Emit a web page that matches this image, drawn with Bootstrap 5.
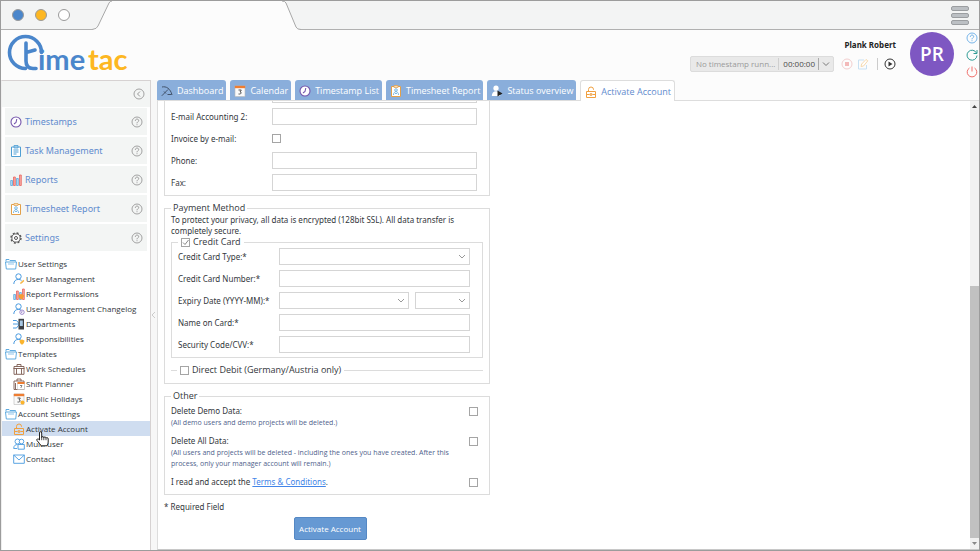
<!DOCTYPE html>
<html lang="en">
<head>
<meta charset="utf-8">
<meta name="viewport" content="width=device-width, initial-scale=1">
<title>TimeTac – Activate Account</title>
<link href="https://cdn.jsdelivr.net/npm/bootstrap@5.3.0/dist/css/bootstrap.min.css" rel="stylesheet">
<style>
body{font-family:"Open Sans","Noto Sans",sans-serif;font-size:8px;line-height:12px;color:#33373c;background:#fcfcfc;border:1px solid #9c9c9c}
svg{display:block;flex:none}
button{font:inherit;color:inherit;padding:0;border:0;background:none}
a{text-decoration:none;color:inherit}
/* browser frame */
.frame-bar{height:29px;background:#f3f4f4;border-bottom:1px solid #b0b0b0}
.frame-dots{padding-left:11px;gap:11px}
.dot{width:12px;height:12px;border-radius:50%;border:1px solid #9a9a9a;background:#fff}
.dot-blue{background:#4a86cb}.dot-amber{background:#fdb722}
.frame-tab{margin:0 0 -1px 22px}
.burger{width:18px;gap:2px;margin-right:10px}
.burger i{height:5px;background:#bcc0c4;border:1px solid #9b9ea1;border-radius:2px}
/* header */
.app-head{height:50px;padding-left:6px}
.user-box{padding:9px 14px 0 0;gap:5px}
.tracker{height:16px;background:#e9e9e9;border:1px solid #dcdcdc;border-radius:2px;color:#9a9a9a;padding:0 3px 0 5px}
.tracker .time{color:#4a4a4a;border-left:1px solid #cfcfcf;border-right:1px solid #aaa;padding:0 3px 0 4px;margin:0 3px}
.tools{gap:4px;padding-left:7px}
.vline{width:1px;height:12px;background:#ccc;margin:0 2px 0 4px}
.user-name{font:700 8px/12px "Noto Sans",sans-serif;color:#222}
.avatar{width:44px;height:44px;border-radius:50%;background:#7e57c2;color:#fff;font-size:19px;font-weight:600;margin-top:2px}
.quick{gap:5px;padding:2px 1px 0 12px}
/* sidebar */
.side{width:150px;background:#fff;border:1px solid #d6d2d2;border-left-color:#eee;border-bottom:0}
.side-top{height:26px;background:#f3f5f4;padding-right:5px}
.side-sections{padding:1px 3px 0;gap:2px}
.side-sections a{height:27px;background:#f3f5f4;color:#5f8bce;font-family:"Noto Sans",sans-serif;font-size:9px;padding:0 4px 0 5px;gap:3px}
.tree{padding-top:5px}
.tree a{height:15px;gap:1px;padding-left:3px;white-space:nowrap}
.tree ul a{padding-left:11px}
.tree a.active{background:#cfddf0}
.hand{left:34px;top:10px;z-index:2}
.splitter{width:6px;background:#f7f7f7;color:#bbb}
/* tabs */
.work-tabs{height:20px;gap:4px;font-size:9px}
.work-tabs a{background:#8aaedb;color:#fff;border-radius:3px 3px 0 0;padding:2px 3px 0 4px;gap:4px;white-space:nowrap}
.work-tabs a.active{background:#fff;color:#5f8bce;border:1px solid #ddd;border-bottom:0;height:21px;z-index:1}
.pane{background:#fff;border:1px solid #ddd;border-right:0;border-bottom-color:#c8c8c8}
/* form */
.form-body{padding:0 6px 9px;width:338px;max-width:100%;font-family:"Noto Sans",sans-serif}
fieldset.box{border:1px solid #dcdcdc;padding:0 6px 4px}
fieldset.pay{padding-bottom:7px}
fieldset.box>legend{float:none;width:auto;font:9px/12px "Open Sans",sans-serif;margin:0;padding:0 2px}
fieldset.box>legend.tick{padding:0 3px}
fieldset.line-only{border-width:1px 0 0;padding:0 6px;height:12px}
.tick span{gap:3px}
.rows{display:flex;flex-direction:column;gap:5px}
.row-line{display:flex;align-items:center;height:17px;margin-right:6px}
.row-line>label{width:101px;flex:none;white-space:nowrap}
.inp{flex:1 1 0;min-width:0;height:17px;border:1px solid #d5d5d5;background:#fff;border-radius:0;padding:0 4px;font-size:8px;color:#33373c}
.inp.month{flex:0 0 55px}
.pair{gap:6px}
select.inp{appearance:none;background:#fff url("data:image/svg+xml,%3Csvg xmlns='http://www.w3.org/2000/svg' viewBox='0 0 8 6'%3E%3Cpath d='M1 1l3 3 3-3' fill='none' stroke='%23999'/%3E%3C/svg%3E") no-repeat right 3px center/8px 6px}
.chk{appearance:none;width:9px;height:9px;border:1px solid #a5a5a5;background:#fff;margin:0;flex:none}
.chk:checked{background:#fff url("data:image/svg+xml,%3Csvg xmlns='http://www.w3.org/2000/svg' viewBox='0 0 7 7'%3E%3Cpath d='M1 3.5l2 2L6.500 1' fill='none' stroke='%23888'/%3E%3C/svg%3E")}
.intro{line-height:11px;margin:0}
.note{font:7px/11px "Open Sans",sans-serif;color:#4f5f8c;margin:0;padding-right:18px}
.opts{gap:7px;padding:3px 5px 2px 0}
.gap6{margin-top:6px}
.terms{color:#4285e8;text-decoration:underline}
.submit{height:23px;width:73px;background:#6699d3;border:1px solid #5588c4;border-radius:2px;color:#fff;font:500 8px/12px "Open Sans",sans-serif;margin:4px 0 0 6px}
/* scrollbar */
.sbar{width:9px;background:#f1f1f1}
.sbar button{height:11px;width:9px}
.sbar .thumb{background:#c1c1c1;flex:254}
.sbar .track{flex:175}
</style>
</head>
<body class="vh-100 d-flex flex-column overflow-hidden">
<svg width="0" height="0" class="position-absolute" aria-hidden="true">
<symbol id="i-help" viewBox="0 0 12 12"><circle cx="6" cy="6" r="5" fill="none" stroke="currentColor" stroke-width=".9"/><path d="M4.300 4.800C4.300 2.500 7.700 2.600 7.700 4.600 7.700 5.800 6 5.800 6 7.300M6 8.300V9.200" fill="none" stroke="currentColor" stroke-width="1"/></symbol>
<symbol id="i-clock" viewBox="0 0 12 12"><circle cx="6" cy="6" r="5" fill="#fff" stroke="#7657ac" stroke-width="1.100"/><path d="M6.800 3L6 6.500 4 8" fill="none" stroke="#7657ac" stroke-width="1.100"/></symbol>
<symbol id="i-clip" viewBox="0 0 12 12"><path d="M1.500 2h9v9.500h-9z" fill="#fff" stroke="#4f9fd4"/><path d="M4 .5h4v2.500H4z" fill="#9dcbea" stroke="#4f9fd4" stroke-width=".8"/><path d="M3.500 5h5M3.500 7h5M3.500 9h3" stroke="#4f9fd4"/></symbol>
<symbol id="i-bars" viewBox="0 0 12 12"><path d="M.7 6.500h1.800v5H.7z" fill="#b9dcf3" stroke="#5ba7dc" stroke-width=".8"/><path d="M3.500 3h1.800v8.500H3.500zM9.500 1h1.800v10.500H9.500z" fill="#f7a8a3" stroke="#e8655f" stroke-width=".8"/><path d="M6.500 4.500h1.800v7H6.500z" fill="#b9dcf3" stroke="#5ba7dc" stroke-width=".8"/></symbol>
<symbol id="i-sheet" viewBox="0 0 12 12"><path d="M1.500 1.500h9v10h-9z" fill="#fff" stroke="#e2a04a"/><path d="M4 .5h4v2H4z" fill="#f8dfba" stroke="#e2a04a" stroke-width=".7"/><circle cx="6" cy="5" r="1.300" fill="none" stroke="#5ba7dc" stroke-width=".8"/><path d="M3.500 10c0-4.500 5-4.500 5 0M5 8l1 1 1-1" fill="none" stroke="#5ba7dc" stroke-width=".8"/></symbol>
<symbol id="i-gear" viewBox="0 0 12 12"><circle cx="6" cy="6" r="5" fill="none" stroke="#555" stroke-width="1.400" stroke-dasharray="2 1.930"/><circle cx="6" cy="6" r="4.100" fill="#fff" stroke="#555" stroke-width=".9"/><circle cx="6" cy="6" r="1.500" fill="none" stroke="#555" stroke-width="1"/></symbol>
<symbol id="i-folder" viewBox="0 0 12 12"><path d="M1 3.500V1.500h3l1 1h5.500v1M.5 4h11l-.8 7H1.300z" fill="#fff" stroke="#4fa3dc" stroke-width=".9"/><path d="M3 6h6" stroke="#8fc4ea"/></symbol>
<symbol id="i-user" viewBox="0 0 12 12"><circle cx="5.500" cy="3.500" r="2.700" fill="none" stroke="#4a9be0"/><path d="M.8 11c0-3 2-4.600 4.700-4.600 1.200 0 2.200.4 3 1" fill="none" stroke="#4a9be0"/></symbol>
<symbol id="i-user-pen" viewBox="0 0 12 12"><use href="#i-user"/><path d="M7 11l.6-1.800 2.800-2.500 1 1.200-2.700 2.500z" fill="#f6b94c"/></symbol>
<symbol id="i-user-clock" viewBox="0 0 12 12"><use href="#i-user"/><circle cx="9" cy="9.200" r="2.200" fill="#fff" stroke="#8a6fc0" stroke-width=".8"/><path d="M9 8v1.400H8" fill="none" stroke="#8a6fc0" stroke-width=".7"/></symbol>
<symbol id="i-user-shield" viewBox="0 0 12 12"><use href="#i-user"/><path d="M6.500 7.500l2.500-1 2.500 1c0 2-.8 3.200-2.500 4.200-1.700-1-2.500-2.200-2.500-4.200z" fill="#fbb42c"/></symbol>
<symbol id="i-bars-shield" viewBox="0 0 12 12"><use href="#i-bars"/><path d="M5.500 7l2.700-1 2.800 1c0 2.200-1 3.600-2.800 4.600C6.500 10.600 5.500 9.200 5.500 7z" fill="#f79b34"/></symbol>
<symbol id="i-dept" viewBox="0 0 12 12"><path d="M0 2.500h3.500l3 3.500M0 10h3.500l3-4M0 6h6" fill="none" stroke="#4a9be0"/><path d="M5.500.8h5.500v10.700H5.500z" fill="#3d4045"/><path d="M6.800 2.500h3v5.500h-3z" fill="#a9c8e4"/></symbol>
<symbol id="i-case" viewBox="0 0 12 12"><path d="M1 3.500h10v7.800H1zM4 3.500v-2h4v2M.5 5.500h11M3.500 5.500v5.500M8.500 5.500v5.500" fill="none" stroke="#7b5a50" stroke-width=".9"/></symbol>
<symbol id="i-shift" viewBox="0 0 12 12"><path d="M1 3h10v8.500H1zM4 3V1h4v2M2.500 5v6" fill="#fff" stroke="#7b5a50" stroke-width=".9"/><path d="M4.500 5h7v6.500h-7z" fill="#fff" stroke="#bbb" stroke-width=".5"/><path d="M4.500 4h7v2h-7z" fill="#ee7d31"/><path d="M7 7.500h2L7.800 10" fill="none" stroke="#555" stroke-width=".7"/></symbol>
<symbol id="i-cal" viewBox="0 0 12 12"><path d="M1 1h10v10.500H1z" fill="#fafafa" stroke="#bbb" stroke-width=".6"/><path d="M.8.8h10.400v2.400H.8z" fill="#ee7d31"/><path d="M4.500 5h2.800L6 7c2 0 1.500 2.500-1.500 2" fill="none" stroke="#444" stroke-width=".9"/></symbol>
<symbol id="i-holiday" viewBox="0 0 12 12"><use href="#i-cal"/><circle cx="9.500" cy="9.500" r="2" fill="#fbb42c"/></symbol>
<symbol id="i-lock" viewBox="0 0 12 12"><path d="M1.500 5.500h9v6h-9zM3.500 5.500V3.500a2.500 2.500 0 0 1 5 0v.5M1.500 8.500h3M7.500 8.500h3M5 7.800h2v1.400H5z" fill="none" stroke="#f0a040"/></symbol>
<symbol id="i-multi" viewBox="0 0 12 12"><circle cx="4.500" cy="3.500" r="2.500" fill="none" stroke="#4a9be0" stroke-width=".9"/><circle cx="8.500" cy="3.500" r="2.300" fill="#fff" stroke="#4a9be0" stroke-width=".9"/><path d="M.7 10.500C.7 7.500 2.500 6.500 4.500 6.500M.7 10.500H4M5 6.500h6.300v4.700H5z" fill="#fff" stroke="#4a9be0" stroke-width=".9"/></symbol>
<symbol id="i-mail" viewBox="0 0 12 12"><path d="M.7 2h10.600v8.300H.7zM.7 2L6 7l5.300-5" fill="#fff" stroke="#4a9be0" stroke-width=".9"/></symbol>
<symbol id="i-dash" viewBox="0 0 12 12"><path d="M1 2c4-1 8.500 1.500 10 8M.8 10.800L7 4.500M3 6.500l2 2M6.500 9.500h4" fill="none" stroke="#42536b" stroke-width="1"/></symbol>
<symbol id="i-status" viewBox="0 0 12 12"><circle cx="5" cy="3.200" r="2.600" fill="#fff"/><path d="M.8 11c0-3 1.700-4.700 4.200-4.700S9.200 8 9.200 11z" fill="#fff"/><path d="M6.500 5.500l5 3-5 3z" fill="#222"/></symbol>
</svg>

<div class="frame-bar d-flex align-items-center flex-shrink-0">
  <div class="frame-dots d-flex"><span class="dot dot-blue"></span><span class="dot dot-amber"></span><span class="dot"></span></div>
  <svg class="frame-tab" width="212" height="29" viewBox="0 0 212 29"><path d="M0 28.500Q5 28 6 25L17 2Q18 0 20 0H190Q193 0 194 2L204 26Q205 28.500 209 28.500V29H0z" fill="#fcfcfc"/><path d="M0 28.500Q5 28 6 25L17 2Q18 0 20 0M190 0Q193 0 194 2L204 26Q205 28.500 209 28.500" fill="none" stroke="#a8a8a8"/></svg>
  <button class="burger d-flex flex-column ms-auto" aria-label="Menu"><i></i><i></i><i></i></button>
</div>

<header class="app-head d-flex flex-shrink-0">
  <svg width="126" height="48" viewBox="0 0 126 48" role="img" aria-label="timetac" font-family="Lato, sans-serif" font-size="29" font-weight="700">
    <g fill="none" stroke="#4a86cb" stroke-width="3.600" stroke-linecap="round"><path d="M34.500 22.500A16 16 0 1 0 18.500 38.500"/><path d="M19 13V31Q19 38.500 26 38.500H29M19 22.500L28 20"/></g>
    <text x="31" y="40" fill="#4a86cb">ime</text><text x="81" y="40" fill="#fdb722">tac</text>
  </svg>
  <div class="ms-auto d-flex align-items-start">
    <div class="user-box d-flex flex-column align-items-end">
      <div class="user-name">Plank Robert</div>
      <div class="d-flex align-items-center">
        <div class="tracker d-flex align-items-center">
          <span>No timestamp runn...</span><span class="time">00:00:00</span>
          <button aria-label="Open tracker"><svg width="8" height="8" viewBox="0 0 8 8"><path d="M1 2.500l3 3 3-3" fill="none" stroke="#777"/></svg></button>
        </div>
        <div class="tools d-flex align-items-center">
        <button aria-label="Stop"><svg width="12" height="12" viewBox="0 0 12 12"><circle cx="6" cy="6" r="5" fill="none" stroke="#f3cfcf"/><path d="M4 4h4v4H4z" fill="#f3b9b9"/></svg></button>
        <button aria-label="Edit"><svg width="12" height="12" viewBox="0 0 12 12"><path d="M7 2H1.500v9h8V7" fill="none" stroke="#c8e0f2"/><path d="M4 8.500l.7-2.500L9 1.500l1.800 1.300L6.500 8z" fill="#fff" stroke="#f6d9ae"/></svg></button>
        <span class="vline"></span>
        <button aria-label="Start"><svg width="12" height="12" viewBox="0 0 12 12"><circle cx="6" cy="6" r="5" fill="#fff" stroke="#333"/><path d="M4.500 3.500l4 2.500-4 2.500z" fill="#333"/></svg></button>
        </div>
      </div>
    </div>
    <div class="avatar d-flex align-items-center justify-content-center">PR</div>
    <div class="quick d-flex flex-column">
      <button aria-label="Help"><svg width="12" height="12" color="#6aaee6"><use href="#i-help"/></svg></button>
      <button aria-label="Reload"><svg width="12" height="12" viewBox="0 0 12 12"><path d="M10.500 4A5 5 0 1 0 11 6.500M11 1v3.500H7.500" fill="none" stroke="#2f9c95"/></svg></button>
      <button aria-label="Log out"><svg width="12" height="12" viewBox="0 0 12 12"><path d="M3.500 2a4.800 4.800 0 1 0 5 0M6 .5v5" fill="none" stroke="#f0706c"/></svg></button>
    </div>
  </div>
</header>

<div class="d-flex flex-grow-1 overflow-hidden">
  <nav class="side flex-shrink-0" aria-label="Main">
    <div class="side-top d-flex align-items-center justify-content-end"><button aria-label="Collapse"><svg width="12" height="12" viewBox="0 0 12 12"><circle cx="6" cy="6" r="5" fill="none" stroke="#999" stroke-width=".9"/><path d="M7 3.500L4.500 6 7 8.500" fill="none" stroke="#999"/></svg></button></div>
    <div class="side-sections d-flex flex-column">
      <a href="#" class="d-flex align-items-center"><svg width="12" height="12"><use href="#i-clock"/></svg><span>Timestamps</span><svg class="ms-auto" width="12" height="12" color="#999"><use href="#i-help"/></svg></a>
      <a href="#" class="d-flex align-items-center"><svg width="12" height="12"><use href="#i-clip"/></svg><span>Task Management</span><svg class="ms-auto" width="12" height="12" color="#999"><use href="#i-help"/></svg></a>
      <a href="#" class="d-flex align-items-center"><svg width="12" height="12"><use href="#i-bars"/></svg><span>Reports</span><svg class="ms-auto" width="12" height="12" color="#999"><use href="#i-help"/></svg></a>
      <a href="#" class="d-flex align-items-center"><svg width="12" height="12"><use href="#i-sheet"/></svg><span>Timesheet Report</span><svg class="ms-auto" width="12" height="12" color="#999"><use href="#i-help"/></svg></a>
      <a href="#" class="d-flex align-items-center"><svg width="12" height="12"><use href="#i-gear"/></svg><span>Settings</span><svg class="ms-auto" width="12" height="12" color="#999"><use href="#i-help"/></svg></a>
    </div>
    <ul class="tree list-unstyled mb-0">
      <li><a href="#" class="d-flex align-items-center"><svg width="12" height="12"><use href="#i-folder"/></svg>User Settings</a>
        <ul class="list-unstyled">
          <li><a href="#" class="d-flex align-items-center"><svg width="12" height="12"><use href="#i-user-pen"/></svg>User Management</a></li>
          <li><a href="#" class="d-flex align-items-center"><svg width="12" height="12"><use href="#i-bars-shield"/></svg>Report Permissions</a></li>
          <li><a href="#" class="d-flex align-items-center"><svg width="12" height="12"><use href="#i-user-clock"/></svg>User Management Changelog</a></li>
          <li><a href="#" class="d-flex align-items-center"><svg width="12" height="12"><use href="#i-dept"/></svg>Departments</a></li>
          <li><a href="#" class="d-flex align-items-center"><svg width="12" height="12"><use href="#i-user-shield"/></svg>Responsibilities</a></li>
        </ul></li>
      <li><a href="#" class="d-flex align-items-center"><svg width="12" height="12"><use href="#i-folder"/></svg>Templates</a>
        <ul class="list-unstyled">
          <li><a href="#" class="d-flex align-items-center"><svg width="12" height="12"><use href="#i-case"/></svg>Work Schedules</a></li>
          <li><a href="#" class="d-flex align-items-center"><svg width="12" height="12"><use href="#i-shift"/></svg>Shift Planner</a></li>
          <li><a href="#" class="d-flex align-items-center"><svg width="12" height="12"><use href="#i-holiday"/></svg>Public Holidays</a></li>
        </ul></li>
      <li><a href="#" class="d-flex align-items-center"><svg width="12" height="12"><use href="#i-folder"/></svg>Account Settings</a>
        <ul class="list-unstyled">
          <li class="position-relative"><a href="#" class="active d-flex align-items-center"><svg width="12" height="12"><use href="#i-lock"/></svg>Activate Account</a>
            <svg class="hand position-absolute" width="13" height="16" viewBox="0 0 13 16"><path d="M3.500 9V2Q3.500.7 4.600.7T5.700 2V6.500Q5.700 5.500 6.700 5.500T7.800 6.700Q7.900 5.900 8.900 5.900T10 7.200Q10.300 6.500 11.200 6.600T12.200 8V11Q12.200 13 11 14.800H5.300Q3.500 12.500 1 9.500.4 8.500 1.300 8T3.500 9z" fill="#fff" stroke="#222" stroke-width="1"/><path d="M5.700 6v3.200M7.800 6.500v2.700M10 7.200v2" stroke="#222" stroke-width=".8"/></svg></li>
          <li><a href="#" class="d-flex align-items-center"><svg width="12" height="12"><use href="#i-multi"/></svg>Multi user</a></li>
          <li><a href="#" class="d-flex align-items-center"><svg width="12" height="12"><use href="#i-mail"/></svg>Contact</a></li>
        </ul></li>
    </ul>
  </nav>
  <div class="splitter d-flex align-items-center flex-shrink-0"><svg width="5" height="8" viewBox="0 0 5 8"><path d="M4 1L1 4l3 3" fill="none" stroke="#ccc"/></svg></div>

  <main class="d-flex flex-column flex-grow-1 overflow-hidden">
    <nav class="work-tabs d-flex flex-shrink-0" aria-label="Open tabs">
      <a href="#" class="d-flex align-items-center"><svg width="12" height="12"><use href="#i-dash"/></svg>Dashboard</a>
      <a href="#" class="d-flex align-items-center"><svg width="12" height="12"><use href="#i-cal"/></svg>Calendar</a>
      <a href="#" class="d-flex align-items-center"><svg width="12" height="12"><use href="#i-clock"/></svg>Timestamp List</a>
      <a href="#" class="d-flex align-items-center"><svg width="12" height="12"><use href="#i-sheet"/></svg>Timesheet Report</a>
      <a href="#" class="d-flex align-items-center"><svg width="12" height="12"><use href="#i-status"/></svg>Status overview</a>
      <a href="#" class="active position-relative d-flex align-items-center"><svg width="12" height="12"><use href="#i-lock"/></svg>Activate Account</a>
    </nav>
    <div class="pane d-flex flex-grow-1 overflow-hidden">
      <div class="d-flex flex-column justify-content-end flex-grow-1 overflow-hidden">
        <form class="form-body">
          <fieldset class="box">
            <div class="rows">
              <div class="row-line"><label for="em1">E-mail Accounting:</label><input class="inp" id="em1" type="text"></div>
              <div class="row-line"><label for="em2">E-mail Accounting 2:</label><input class="inp" id="em2" type="text"></div>
              <div class="row-line"><label for="inv">Invoice by e-mail:</label><input class="chk" id="inv" type="checkbox"></div>
              <div class="row-line"><label for="ph">Phone:</label><input class="inp" id="ph" type="text"></div>
              <div class="row-line"><label for="fx">Fax:</label><input class="inp" id="fx" type="text"></div>
            </div>
          </fieldset>
          <fieldset class="box pay gap6">
            <legend>Payment Method</legend>
            <p class="intro">To protect your privacy, all data is encrypted (128bit SSL). All data transfer is completely secure.</p>
            <fieldset class="box">
              <legend class="tick"><span class="d-flex align-items-center"><input class="chk" id="cc" type="checkbox" checked><label for="cc">Credit Card</label></span></legend>
              <div class="rows">
                <div class="row-line"><label for="ct">Credit Card Type:*</label><select class="inp" id="ct"><option></option></select></div>
                <div class="row-line"><label for="cn">Credit Card Number:*</label><input class="inp" id="cn" type="text"></div>
                <div class="row-line"><label for="ey">Expiry Date (YYYY-MM):*</label><div class="pair d-flex flex-grow-1"><select class="inp" id="ey"><option></option></select><select class="inp month" id="em" aria-label="Expiry month"><option></option></select></div></div>
                <div class="row-line"><label for="nc">Name on Card:*</label><input class="inp" id="nc" type="text"></div>
                <div class="row-line"><label for="cv">Security Code/CVV:*</label><input class="inp" id="cv" type="text"></div>
              </div>
            </fieldset>
            <fieldset class="box line-only gap6">
              <legend class="tick"><span class="d-flex align-items-center"><input class="chk" id="dd" type="checkbox"><label for="dd">Direct Debit (Germany/Austria only)</label></span></legend>
            </fieldset>
          </fieldset>
          <fieldset class="box gap6">
            <legend>Other</legend>
            <div class="opts d-flex flex-column">
              <div><div class="d-flex justify-content-between align-items-center"><label for="d1">Delete Demo Data:</label><input class="chk" id="d1" type="checkbox"></div><p class="note">(All demo users and demo projects will be deleted.)</p></div>
              <div><div class="d-flex justify-content-between align-items-center"><label for="d2">Delete All Data:</label><input class="chk" id="d2" type="checkbox"></div><p class="note">(All users and projects will be deleted - including the ones you have created. After this process, only your manager account will remain.)</p></div>
              <div class="d-flex justify-content-between align-items-center"><label for="d3">I read and accept the <a class="terms" href="#">Terms &amp; Conditions</a>.</label><input class="chk" id="d3" type="checkbox"></div>
            </div>
          </fieldset>
          <div class="gap6">* Required Field</div>
          <div class="text-center"><button class="submit" type="submit">Activate Account</button></div>
        </form>
      </div>
      <div class="sbar d-flex flex-column flex-shrink-0">
        <button aria-label="Scroll up"><svg width="9" height="11" viewBox="0 0 9 11"><path d="M2 7h5L4.500 4z" fill="#444"/></svg></button>
        <div class="track"></div><div class="thumb"></div>
        <button aria-label="Scroll down"><svg width="9" height="11" viewBox="0 0 9 11"><path d="M2 4h5L4.500 7z" fill="#888"/></svg></button>
      </div>
    </div>
  </main>
</div>
<script src="https://cdn.jsdelivr.net/npm/bootstrap@5.3.0/dist/js/bootstrap.bundle.min.js"></script>
</body>
</html>
